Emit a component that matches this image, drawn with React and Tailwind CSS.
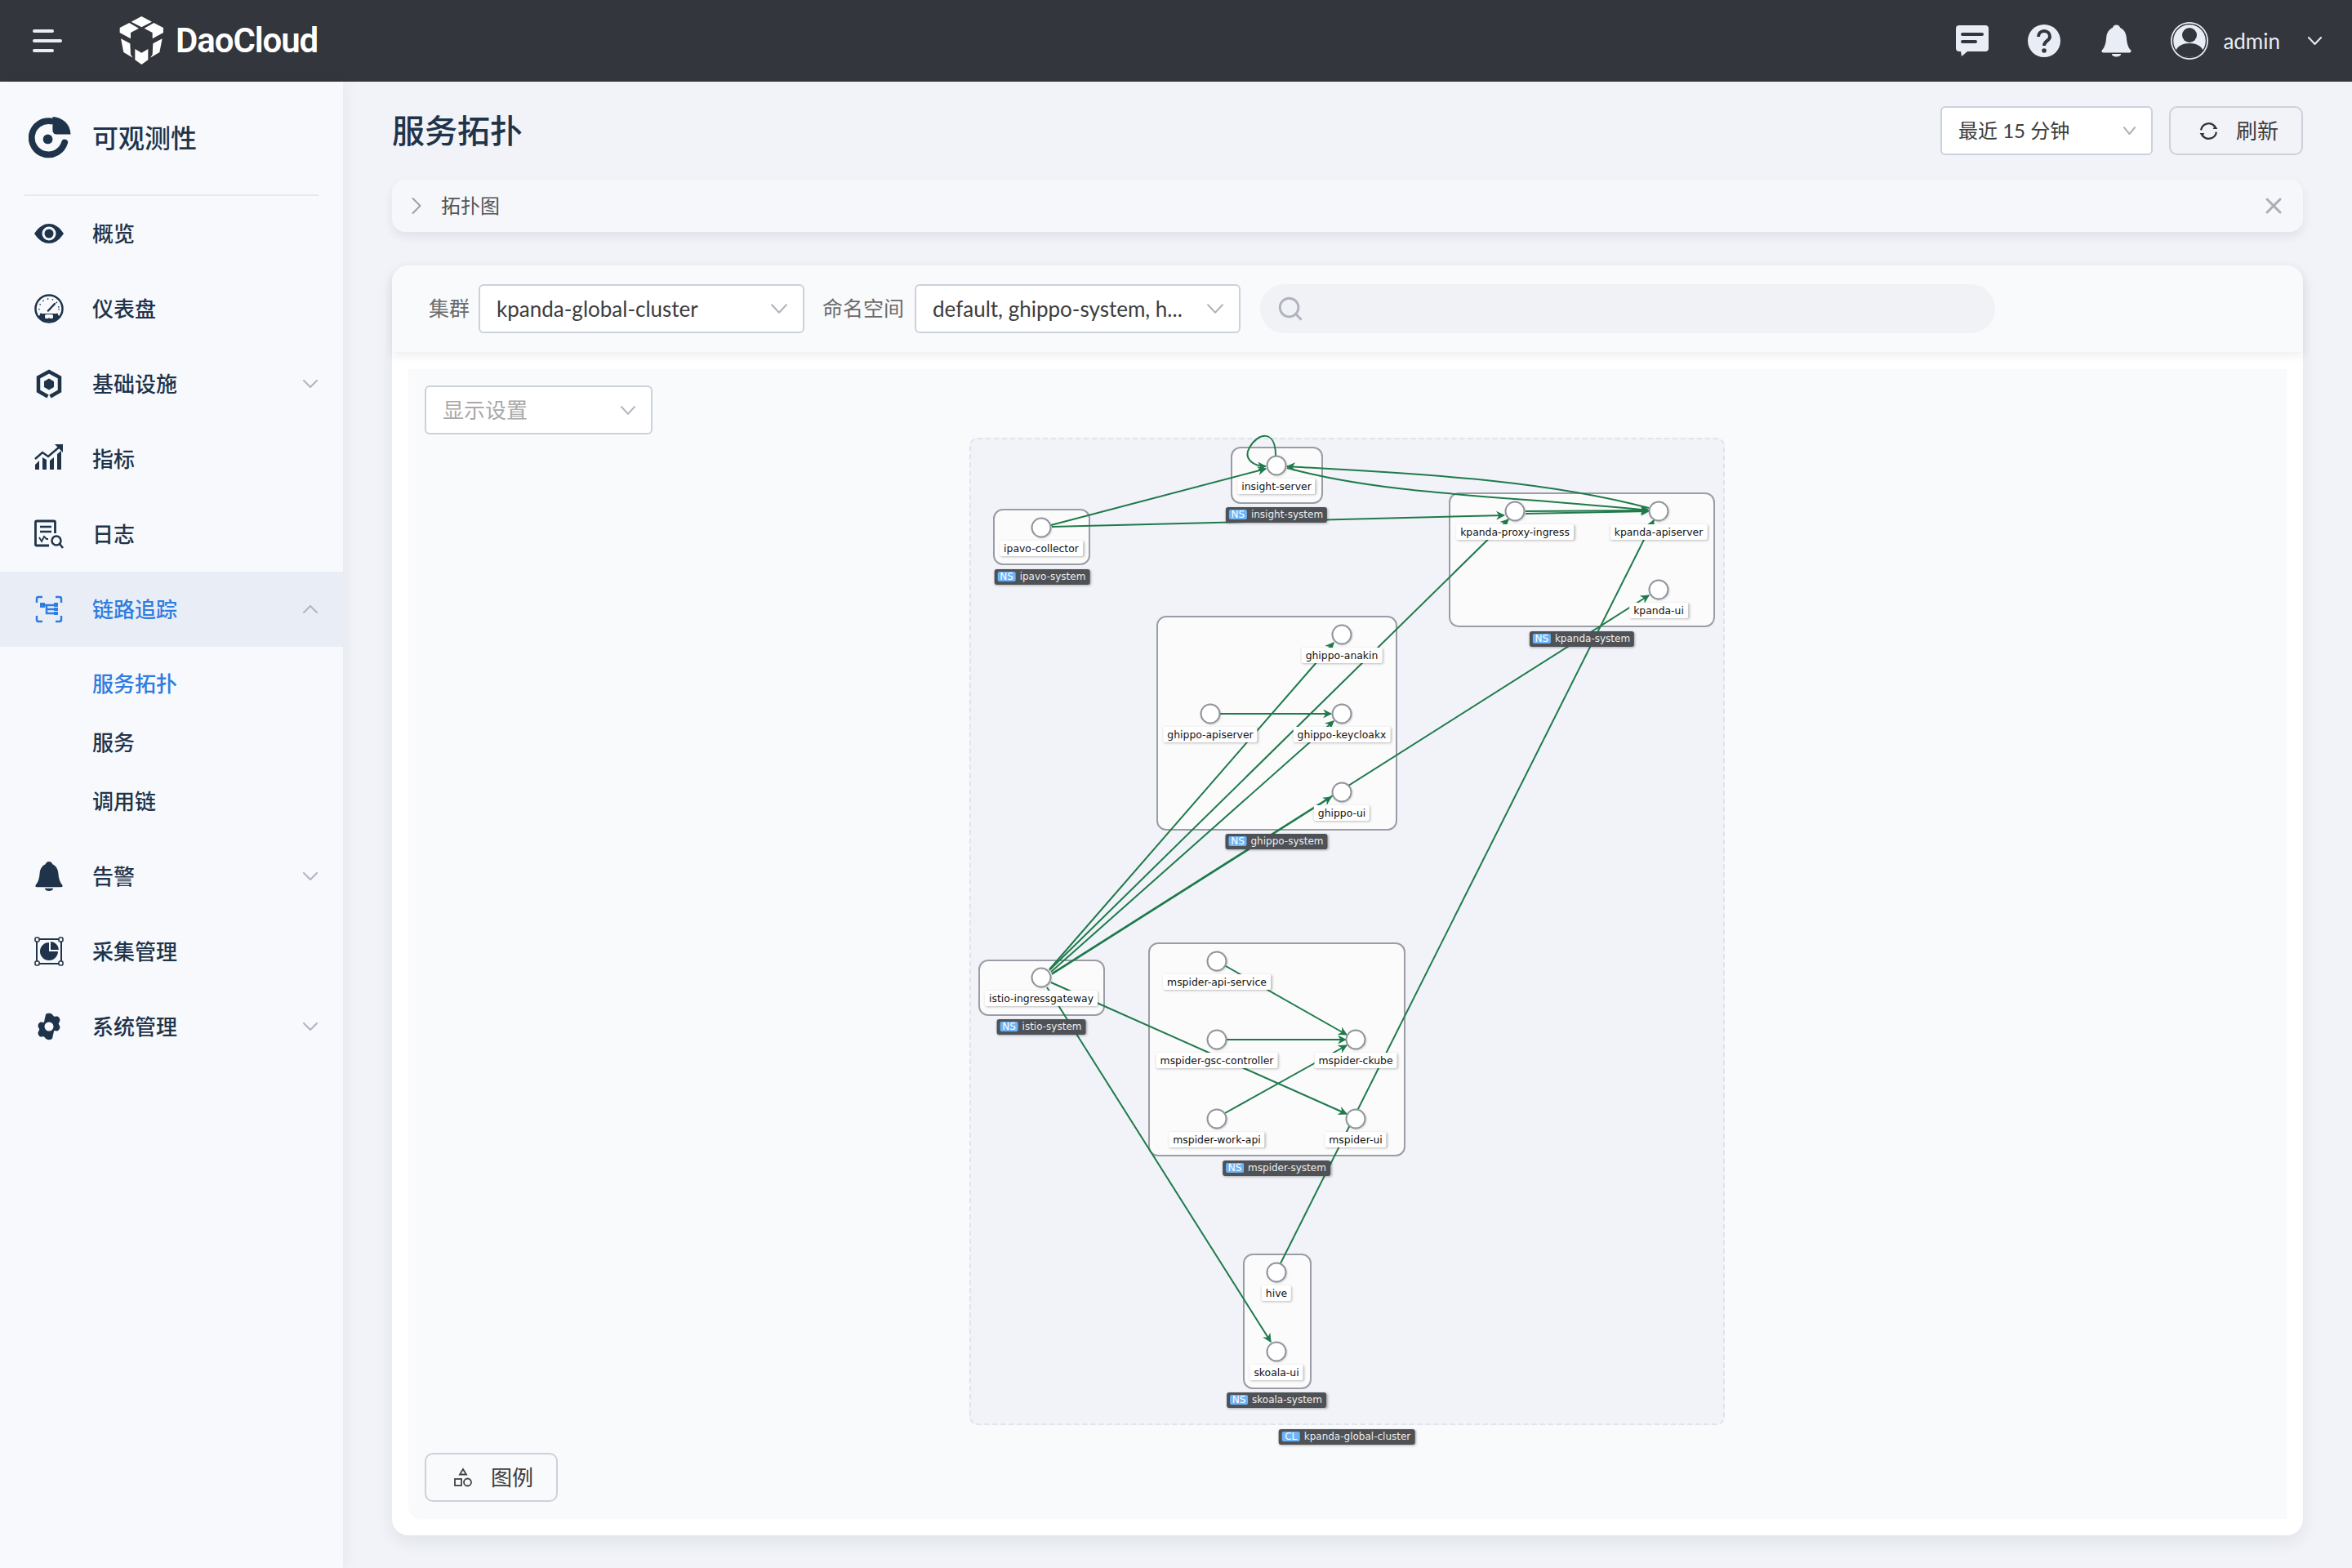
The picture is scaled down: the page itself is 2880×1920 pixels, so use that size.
import { ChevronRight, X, Search } from 'lucide-react';

const UI_FONT = 'font-["Lato","Noto_Sans_CJK_SC",sans-serif]';

const dark = '#1f344a';

const Chevron = ({ className = 'w-[18px] h-[10px] text-[#b0b5bf]', up }) => (
    <svg viewBox="0 0 18 10" preserveAspectRatio="none" className={`shrink-0 ${className}`} fill="none" stroke="currentColor" strokeWidth="2" strokeLinecap="round" strokeLinejoin="round">
        <path d={up ? 'M1 9 9 1l8 8' : 'M1 1l8 8 8-8'} vectorEffect="non-scaling-stroke" />
    </svg>
);

const Eye = () => (
    <svg viewBox="0 0 36 36" className="w-9 h-9">
        <path d="M0 18C6 9 12 6 18 6s12 3 18 12c-6 9-12 12-18 12S6 27 0 18Z" fill="currentColor" />
        <circle cx="18" cy="18" r="8.500" fill="#f7f9fd" />
        <circle cx="18" cy="18" r="5.500" fill="currentColor" />
    </svg>
);

const Gauge = () => (
    <svg viewBox="0 0 36 36" className="w-9 h-9">
        <circle cx="18" cy="18" r="16.500" fill="none" stroke="currentColor" strokeWidth="2.500" />
        <path d="M5 27h26a16 16 0 0 1-26 0Z M8 24h20l3 4H5Z" fill="currentColor" />
        <rect x="13" y="25" width="10" height="5" rx="1.500" fill="#f7f9fd" />
        <circle cx="18" cy="18" r="12" fill="none" stroke="currentColor" strokeWidth="1.500" strokeDasharray="1.500 4.500" />
        <path d="M17 20.500 25 12" stroke="currentColor" strokeWidth="2.500" strokeLinecap="round" />
    </svg>
);

const Infra = () => (
    <svg viewBox="0 0 36 36" className="w-9 h-9">
        <path d="M16.500 33.500 5 27V10L18 3l13 7v17l-11.500 6.500" fill="none" stroke="currentColor" strokeWidth="4.500" />
        <path d="M18 11.500l6 3.500v7l-6 3.500-6-3.500v-7Z" fill="currentColor" />
    </svg>
);

const Metrics = () => (
    <svg viewBox="0 0 36 36" className="w-9 h-9">
        <path d="M1 18 10 10l7 5L31 3" fill="none" stroke="currentColor" strokeWidth="2.500" />
        <path d="M25 0h10v10Z" fill="currentColor" />
        <path d="M1 31v-6l5-5v11Z M10 31V16l5 3v12Z M19 31V20l5-4v15Z M28 31V12l5-4v23Z" fill="currentColor" />
    </svg>
);

const LogIcon = () => (
    <svg viewBox="0 0 36 36" className="w-9 h-9" fill="none" stroke="currentColor">
        <path d="M18 32H3a1.500 1.500 0 0 1-1.500-1.500v-27A1.500 1.500 0 0 1 3 2h21a1.500 1.500 0 0 1 1.500 1.500V17" strokeWidth="2.800" />
        <path d="M7 9h14M7 15h14" strokeWidth="2.500" />
        <path d="M6 22l3 5 3-6 3 3h2" strokeWidth="1.800" />
        <circle cx="27" cy="26" r="5.500" strokeWidth="2.500" />
        <path d="M31 30l4 5" strokeWidth="2.500" />
    </svg>
);

const Trace = () => (
    <svg viewBox="0 0 36 36" className="w-9 h-9" fill="none" stroke="currentColor" strokeWidth="2.500">
        <path d="M10 3H5a2 2 0 0 0-2 2v5M26 3h5a2 2 0 0 1 2 2v5M3 26v5a2 2 0 0 0 2 2h5M33 26v5a2 2 0 0 1-2 2h-5" />
        <path d="M11 13h14M15 13v10h10M15 18h10" />
        <rect x="7" y="10" width="6" height="6" fill="currentColor" stroke="none" />
        <rect x="24" y="10" width="5" height="5" fill="currentColor" stroke="none" />
        <rect x="24" y="16" width="5" height="4" fill="currentColor" stroke="none" />
        <rect x="24" y="21" width="5" height="4" fill="currentColor" stroke="none" />
    </svg>
);

const Bell = ({ className = 'w-9 h-9' }) => (
    <svg viewBox="0 0 36 38" className={className} fill="currentColor">
        <path d="M18 0c2.500 0 4 1.500 4.500 3.500C27 5.500 29.500 9.500 30 15c.5 6 1.500 11 5 15 1.200 1.500.6 3-1.500 3h-31C.4 33-.2 31.500 1 30c3.500-4 4.500-9 5-15 .5-5.500 3-9.500 7.500-11.500C14 1.500 15.500 0 18 0Z" />
        <path d="M12.500 34.500h11a5.500 3.500 0 0 1-11 0Z" />
    </svg>
);

const Collect = () => (
    <svg viewBox="0 0 36 36" className="w-9 h-9" fill="none" stroke="currentColor">
        <rect x="3" y="3" width="30" height="30" strokeWidth="2" />
        <rect x="1" y="1" width="5" height="5" rx="1.500" fill="#f7f9fd" strokeWidth="1.600" />
        <rect x="30" y="1" width="5" height="5" rx="1.500" fill="#f7f9fd" strokeWidth="1.600" />
        <rect x="1" y="30" width="5" height="5" rx="1.500" fill="#f7f9fd" strokeWidth="1.600" />
        <rect x="30" y="30" width="5" height="5" rx="1.500" fill="#f7f9fd" strokeWidth="1.600" />
        <path d="M18 7a11 11 0 1 0 11 11H18Z" fill="currentColor" stroke="none" />
        <path d="M20 6a10.500 10.500 0 0 1 10 10H20Z" fill="currentColor" stroke="none" />
        <path d="M19 8v9h10" stroke="#f7f9fd" strokeWidth="1.500" />
    </svg>
);

const Gear = () => (
    <svg viewBox="0 0 36 36" className="w-9 h-9" fill="currentColor">
        <path
            fillRule="evenodd"
            d="M14 3.200c1.500-1.800 6.500-1.800 8 0l2.200 2.600 3.400-.4c2.300-.3 4.800 4 3.500 6l-1.400 3 1.400 3c1.300 2-1.200 6.300-3.500 6l-3.400-.4L22 32.800c-1.500 1.800-6.500 1.800-8 0l-2.200-2.600-3.400.4c-2.300.3-4.800-4-3.500-6l1.400-3-1.400-3c-1.300-2 1.200-6.300 3.500-6l3.400.4ZM18 12.500a5.500 5.500 0 1 0 0 11 5.500 5.500 0 0 0 0-11Z"
        />
    </svg>
);

const navItems = [
    { label: '概览', icon: <Eye /> },
    { label: '仪表盘', icon: <Gauge /> },
    { label: '基础设施', icon: <Infra />, arrow: true },
    { label: '指标', icon: <Metrics /> },
    { label: '日志', icon: <LogIcon /> },
    {
        label: '链路追踪',
        icon: <Trace />,
        active: true,
        children: ['服务拓扑', '服务', '调用链'],
    },
    { label: '告警', icon: <Bell />, arrow: true },
    { label: '采集管理', icon: <Collect /> },
    { label: '系统管理', icon: <Gear />, arrow: true },
];

const Sidebar = () => (
    <aside className="w-[420px] shrink-0 bg-[#f7f9fd] shadow-[4px_0_16px_rgba(30,40,70,0.05)] z-10 text-[#1f344a]">
        <div className="mx-[30px] h-[140px] border-b-2 border-[#e6e9f2] flex items-center pl-[5px]">
            <svg viewBox="0 0 54 54" className="w-[53px] h-[53px]" fill="none">
                <path d="M28 5.500A21 21 0 1 0 45 32" stroke={dark} strokeWidth="8" strokeLinecap="round" />
                <path d="M30 0A22.500 22.500 0 0 1 52.500 22H35a5 5 0 0 1-5-5Z" fill={dark} />
                <circle cx="24" cy="28" r="6" fill={dark} />
            </svg>
            <span className="ml-[25px] text-[32px] font-medium">可观测性</span>
        </div>
        {navItems.map((item) => (
            <div key={item.label}>
                <div className={`h-[92px] flex items-center pl-[42px] pr-[31px] ${item.active ? 'bg-[#e9eef6] text-[#2f7de1]' : ''}`}>
                    <span className="w-9 h-9 flex items-center justify-center">{item.icon}</span>
                    <span className="ml-[35px] text-[26px] font-medium flex-1">{item.label}</span>
                    {item.arrow && <Chevron />}
                    {item.children && <Chevron up />}
                </div>
                {item.children && (
                    <div className="pt-[9px] pb-[10px]">
                        {item.children.map((child, i) => (
                            <div key={child} className={`h-[72px] flex items-center pl-[113px] text-[26px] font-medium ${i === 0 ? 'text-[#2f7de1]' : ''}`}>
                                {child}
                            </div>
                        ))}
                    </div>
                )}
            </div>
        ))}
    </aside>
);

const Header = () => (
    <header className="h-[100px] shrink-0 bg-[#33363c] flex items-center text-[#e9edf5] pl-[40px] pr-[37px]">
        <div className="w-[36px] flex flex-col gap-[8px]">
            <div className="w-[26px] h-[4px] rounded-full bg-[#e9edf5]" />
            <div className="w-[36px] h-[4px] rounded-full bg-[#e9edf5]" />
            <div className="w-[26px] h-[4px] rounded-full bg-[#e9edf5]" />
        </div>
        <svg viewBox="0 0 216 216" className="ml-[64px] w-[72px] h-[72px]" fill="#fff">
            <path d="M62 38 100 18l38 20-38 20Z" />
            <path d="M20 60 55 42l35 20-30 16v22L20 78Z" />
            <path d="M180 60 145 42l-35 20 30 16v22l40-22Z" />
            <path d="M24 100l34 18 2 40 8 12-34-20Z" />
            <path d="M176 100l-34 18-2 40-8 12 34-20Z" />
            <path d="M76 138l24 14 24-14v40l-24 17-24-17Z" />
        </svg>
        <span className='ml-[3px] text-[42px] font-semibold leading-none text-white tracking-[-1.1px] font-["Liberation_Sans_Narrow","Roboto",sans-serif]'>DaoCloud</span>
        <div className="ml-auto flex items-center">
            <svg viewBox="0 0 40 38" className="w-[40px] h-[38px]">
                <path d="M4 0h32a4 4 0 0 1 4 4v24a4 4 0 0 1-4 4H14l-7 6-1-6H4a4 4 0 0 1-4-4V4a4 4 0 0 1 4-4Z" fill="#e9edf5" />
                <path d="M8 11h24M8 20h16" stroke="#33363c" strokeWidth="4" strokeLinecap="round" />
            </svg>
            <svg viewBox="0 0 40 40" className="ml-[48px] w-[40px] h-[40px]">
                <circle cx="20" cy="20" r="20" fill="#e9edf5" />
                <path d="M13 15c0-4 3-7 7-7s7 3 7 7c0 5-7 5-7 11" fill="none" stroke="#33363c" strokeWidth="4" />
                <circle cx="20" cy="32" r="2.800" fill="#33363c" />
            </svg>
            <Bell className="ml-[50px] w-[37px] h-[42px]" />
            <svg viewBox="0 0 46 46" className="ml-[48px] w-[46px] h-[46px]">
                <circle cx="23" cy="23" r="23" fill="#e9edf5" />
                <circle cx="23" cy="23" r="20.500" fill="none" stroke="#33363c" strokeWidth="1.500" />
                <circle cx="23" cy="16" r="9" fill="#33363c" />
                <path d="M6 35c3-6 9-9 17-9s14 3 17 9c-4 5-10 8-17 8S10 40 6 35Z" fill="#33363c" />
            </svg>
            <span className="ml-[18px] text-[26px]">admin</span>
            <Chevron className="ml-[34px] w-[17px] h-[10px] text-[#e9edf5]" />
        </div>
    </header>
);

const Select = ({ children, className = '', muted, size = 'text-[26px]', arrow = 'w-[20px] h-[12px]' }) => (
    <div className={`h-[60px] rounded-[6px] border-2 border-[#ccd1dc] bg-white flex items-center justify-between pl-[20px] pr-[19px] ${size} ${muted ? 'text-[#a9a9a9]' : 'text-[#3d3d3d]'} ${className}`}>
        <span className="truncate">{children}</span>
        <Chevron className={`text-[#aeb3bd] ${arrow}`} />
    </div>
);

const groups = [
    { x: 1507, y: 547, r: 1620, b: 617 },
    { x: 1216, y: 623, r: 1335, b: 692 },
    { x: 1774, y: 603, r: 2100, b: 768 },
    { x: 1416, y: 754, r: 1711, b: 1017 },
    { x: 1198, y: 1175, r: 1353, b: 1244 },
    { x: 1406, y: 1154, r: 1721, b: 1416 },
    { x: 1522, y: 1535, r: 1606, b: 1701 },
];

const nodes = [
    { name: 'insight-server', x: 1563, y: 570 },
    { name: 'ipavo-collector', x: 1275, y: 646 },
    { name: 'kpanda-proxy-ingress', x: 1855, y: 626 },
    { name: 'kpanda-apiserver', x: 2031, y: 626 },
    { name: 'kpanda-ui', x: 2031, y: 722 },
    { name: 'ghippo-anakin', x: 1643, y: 777 },
    { name: 'ghippo-apiserver', x: 1482, y: 874 },
    { name: 'ghippo-keycloakx', x: 1643, y: 874 },
    { name: 'ghippo-ui', x: 1643, y: 970 },
    { name: 'istio-ingressgateway', x: 1275, y: 1197 },
    { name: 'mspider-api-service', x: 1490, y: 1177 },
    { name: 'mspider-gsc-controller', x: 1490, y: 1273 },
    { name: 'mspider-ckube', x: 1660, y: 1273 },
    { name: 'mspider-work-api', x: 1490, y: 1370 },
    { name: 'mspider-ui', x: 1660, y: 1370 },
    { name: 'hive', x: 1563, y: 1558 },
    { name: 'skoala-ui', x: 1563, y: 1655 },
];

const tags = [
    { kind: 'NS', name: 'insight-system', x: 1563, y: 621 },
    { kind: 'NS', name: 'ipavo-system', x: 1276, y: 697 },
    { kind: 'NS', name: 'kpanda-system', x: 1937, y: 773 },
    { kind: 'NS', name: 'ghippo-system', x: 1563, y: 1021 },
    { kind: 'NS', name: 'istio-system', x: 1275, y: 1248 },
    { kind: 'NS', name: 'mspider-system', x: 1563, y: 1421 },
    { kind: 'NS', name: 'skoala-system', x: 1563, y: 1705 },
    { kind: 'CL', name: 'kpanda-global-cluster', x: 1649, y: 1750 },
];

const edges = [
    'M1287 643L1550 574',
    'M1288 645L1842 631',
    'M1868 626L2019 625',
    'M1868 629L2019 626',
    'M1576 573C1700 607 1850 607 2019 625',
    'M2019 622C1880 585 1720 580 1576 571',
    'M1562 558C1562 525 1540 530 1530 548C1522 562 1535 571 1550 571',
    'M1285 1188L1847 636',
    'M1285 1187L1633 787',
    'M1287 1190L1633 883',
    'M1288 1193L1630 976',
    'M1288 1192L2019 729',
    'M1568 1547L2025 637',
    'M1494 874L1630 874',
    'M1501 1183L1649 1267',
    'M1502 1273L1648 1273',
    'M1500 1363L1649 1280',
    'M1287 1203L1649 1364',
    'M1282 1209L1556 1643',
];

const toCanvasX = (x) => x - 500;
const toCanvasY = (y) => y - 452;

const TopologyGraph = () => (
    <>
        <div
            className="absolute border-2 border-dashed border-[#e0e2ec] rounded-[10px] bg-[#f1f3f8]"
            style={{ left: toCanvasX(1187), top: toCanvasY(536), width: 925, height: 1209 }}
        />
        {groups.map((g) => (
            <div
                key={g.x}
                className="absolute border-2 border-[#9b9da6] rounded-[12px] bg-[#fbfbfc]"
                style={{ left: toCanvasX(g.x), top: toCanvasY(g.y), width: g.r - g.x, height: g.b - g.y }}
            />
        ))}
        <svg className="absolute inset-0 w-full h-full overflow-visible" fill="none">
            <defs>
                <marker id="arrow" viewBox="0 0 10 10" refX="9" refY="5" markerWidth="5.500" markerHeight="5.500" orient="auto">
                    <path d="M0 0 10 5 0 10 3 5Z" fill="#1f7a4b" />
                </marker>
            </defs>
            <g transform="translate(-500 -452)" stroke="#1f7a4b" strokeWidth="2">
                {edges.map((d) => (
                    <path key={d} d={d} markerEnd="url(#arrow)" />
                ))}
            </g>
        </svg>
        {nodes.map((n) => (
            <div
                key={n.name}
                className="absolute w-[25px] h-[25px] rounded-full bg-white border-2 border-[#92949d] shadow-[1px_1px_2px_rgba(0,0,0,0.15)] -translate-x-1/2 -translate-y-1/2"
                style={{ left: toCanvasX(n.x), top: toCanvasY(n.y) }}
            />
        ))}
        {nodes.map((n) => (
            <div
                key={n.name}
                className='absolute h-[19px] px-[5px] rounded-[2px] bg-white shadow-[1px_1px_3px_rgba(0,0,0,0.25)] -translate-x-1/2 text-[12.4px] leading-[19px] text-[#111] whitespace-nowrap font-["DejaVu_Sans",sans-serif]'
                style={{ left: toCanvasX(n.x), top: toCanvasY(n.y) + 16 }}
            >
                {n.name}
            </div>
        ))}
        {tags.map((t) => (
            <div
                key={t.name}
                className='absolute h-[18.500px] pl-[4px] pr-[5px] rounded-[3px] bg-[#4e5257] shadow-[1px_1px_3px_rgba(0,0,0,0.3)] -translate-x-1/2 flex items-center gap-[5px] text-[12px] text-[#eeeeee] whitespace-nowrap font-["DejaVu_Sans",sans-serif]'
                style={{ left: toCanvasX(t.x), top: toCanvasY(t.y) }}
            >
                <span className="h-[12px] w-[22px] rounded-[2px] bg-[#6db3f5] text-white flex items-center justify-center leading-none">{t.kind}</span>
                {t.name}
            </div>
        ))}
    </>
);

const App = () => (
    <div className={`h-screen w-full overflow-hidden flex flex-col bg-[#f1f3f8] ${UI_FONT}`}>
        <Header />
        <div className="flex-1 flex min-h-0">
            <Sidebar />
            <main className="flex-1 px-[60px] pt-[30px] min-w-0">
                <div className="h-[60px] flex items-center">
                    <h1 className="text-[40px] font-medium text-[#1f344a]">服务拓扑</h1>
                    <div className="ml-auto flex gap-[20px]">
                        <Select className="w-[260px]" size="text-[24px]" arrow="w-[15px] h-[10px]">最近 15 分钟</Select>
                        <button className="w-[164px] h-[60px] rounded-[10px] border-2 border-[#ccd1dc] flex items-center pl-[34px] gap-[21px] text-[26px] text-[#3d3d3d]">
                            <svg viewBox="0 0 24 24" className="w-[25px] h-[25px]" fill="none" stroke="#333" strokeWidth="2.200">
                                <path d="M3 11a9 9 0 0 1 16-4.500M21 13a9 9 0 0 1-16 4.500" />
                                <path d="M17 9.500h5.500L19.500 5Z M7 14.500H1.500L4.500 19Z" fill="#333" stroke="none" />
                            </svg>
                            刷新
                        </button>
                    </div>
                </div>
                <div className="mt-[30px] h-[64px] rounded-[16px] bg-[#f6f7fa] shadow-[0_6px_12px_rgba(30,40,70,0.08)] flex items-center pl-[12px] pr-[20px] text-[24px] text-[#555]">
                    <ChevronRight className="w-[36px] h-[36px] text-[#9aa0ab]" strokeWidth={1.3} />
                    <span className="ml-[12px]">拓扑图</span>
                    <X className="ml-auto w-[32px] h-[32px] text-[#a8adb8]" strokeWidth={2.2} />
                </div>
                <div className="mt-[41px] h-[1555px] rounded-[20px] bg-white shadow-[0_8px_20px_rgba(30,40,70,0.08)] flex flex-col">
                    <div className="h-[106px] shrink-0 rounded-t-[20px] bg-[#f9fafc] shadow-[0_4px_12px_rgba(30,40,70,0.08)] flex items-center pl-[45px] text-[25px] text-[#6b6b6b]">
                        <span>集群</span>
                        <Select className="ml-[11px] w-[399px]">kpanda-global-cluster</Select>
                        <span className="ml-[22px]">命名空间</span>
                        <Select className="ml-[13px] w-[399px]">default, ghippo-system, h...</Select>
                        <div className="ml-[24px] w-[900px] h-[60px] rounded-full bg-[#f0f2f6] flex items-center pl-[20px]">
                            <Search className="w-[34px] h-[34px] text-[#aeb3bd]" strokeWidth={2} />
                        </div>
                    </div>
                    <div className="relative flex-1 mx-[20px] mt-[21px] mb-[20px] rounded-bl-[16px] bg-[#f9fafc] p-[20px] pb-[21px] flex flex-col">
                        <TopologyGraph />
                        <Select className="relative w-[279px]" muted arrow="w-[18px] h-[11px]">显示设置</Select>
                        <button className="relative mt-auto w-[163px] h-[60px] rounded-[10px] border-2 border-[#ccd1dc] flex items-center pl-[33px] gap-[22px] text-[26px] text-[#3d3d3d]">
                            <svg viewBox="0 0 24 24" className="w-[24px] h-[24px]" fill="none" stroke="#444" strokeWidth="1.800">
                                <path d="M12 2l4 6.500H8Z" />
                                <rect x="2" y="14" width="8" height="8" />
                                <circle cx="17.500" cy="18" r="4.500" />
                            </svg>
                            图例
                        </button>
                    </div>
                </div>
            </main>
        </div>
    </div>
);

export default App;
